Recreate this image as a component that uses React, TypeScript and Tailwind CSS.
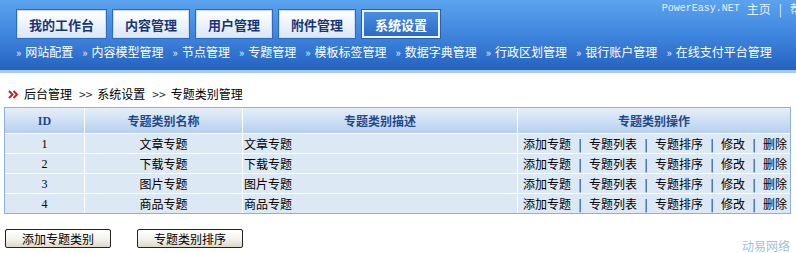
import React from 'react';

const cjk = "font-['SimSun','Noto_Sans_CJK_SC',sans-serif]";

const topTabs = ['我的工作台', '内容管理', '用户管理', '附件管理', '系统设置'];
const subLinks = ['网站配置', '内容模型管理', '节点管理', '专题管理', '模板标签管理', '数据字典管理', '行政区划管理', '银行账户管理', '在线支付平台管理'];
const crumbs = ['后台管理', '系统设置', '专题类别管理'];
const rows = [
  { id: 1, name: '文章专题' },
  { id: 2, name: '下载专题' },
  { id: 3, name: '图片专题' },
  { id: 4, name: '商品专题' },
];
const ops = ['添加专题', '专题列表', '专题排序', '修改', '删除'];

const App: React.FC = () => {
  return (
    <div className={`w-[796px] h-[253px] overflow-hidden bg-white text-[12px] leading-none text-black ${cjk}`}>
      {/* top bar */}
      <div className="h-[73px] border-b-[3px] border-[#a9c9ee] bg-gradient-to-b from-[#5ba3ef] via-[#3f85dd] to-[#2463c0]">
        <div className="flex justify-between items-start">
          <div className="flex gap-[7px] pl-[17px] mt-[10px]">
            {topTabs.map((t, i) =>
              i === 4 ? (
                <div
                  key={t}
                  className="h-[28px] px-[11px] flex items-center border-2 border-[#eaf2fc] bg-gradient-to-b from-[#4b8ee0] to-[#2c6bc6] text-white font-bold text-[13px] shadow-[0_0_0_1px_#2a5fae]"
                >
                  {t}
                </div>
              ) : (
                <div
                  key={t}
                  className="h-[28px] px-[11px] flex items-center border border-[#c9dcf3] bg-gradient-to-b from-white to-[#dbe8f6] text-[#17367a] font-bold text-[13px] shadow-[0_0_0_1px_#2f6ac0]"
                >
                  {t}
                </div>
              )
            )}
          </div>
          <div className="flex items-center h-[14px] mt-[2px] mr-[-6px] text-[#e6effb] whitespace-nowrap">
            <span className="font-['Liberation_Mono',monospace] text-[10px]">PowerEasy.NET</span>
            <span className="ml-[7px]">主页</span>
            <span className="mx-[8px]">|</span>
            <span>帮</span>
          </div>
        </div>
        <div className="flex gap-[9px] pl-[16px] mt-[8px] text-white text-[12px] whitespace-nowrap">
          {subLinks.map((s) => (
            <span key={s} className="flex items-center">
              <span className="text-[11px] mr-[4px] text-[#e8f0fb]">»</span>
              {s}
            </span>
          ))}
        </div>
      </div>

      {/* breadcrumb */}
      <div className="flex items-center h-[14px] mt-[14px] pl-[8px]">
        <svg width="11" height="9" viewBox="0 0 11 9" className="mr-[5px]">
          <path d="M1 1 L4.5 4.5 L1 8" stroke="#c8202c" strokeWidth="2" fill="none" />
          <path d="M5.5 1 L9 4.5 L5.5 8" stroke="#c8202c" strokeWidth="2" fill="none" />
        </svg>
        {crumbs.map((c, i) => (
          <span key={c} className="flex items-center">
            {i > 0 && <span className="ml-[7px] mr-[5px] text-[#333]">&gt;&gt;</span>}
            {c}
          </span>
        ))}
      </div>

      {/* table */}
      <div className="ml-[4px] mt-[6px] w-[787px] border border-[#8fb0d9]">
        <div className="grid grid-cols-[80px_158px_275px_1fr] h-[25px] bg-gradient-to-b from-[#e6effa] via-[#cfe0f4] to-[#b4cfee] text-[#1e4a8c] font-bold">
          <div className="flex items-center justify-center border-r border-white font-['Liberation_Serif',serif] text-[12px]">ID</div>
          <div className="flex items-center justify-center border-r border-white">专题类别名称</div>
          <div className="flex items-center justify-center border-r border-white">专题类别描述</div>
          <div className="flex items-center justify-center">专题类别操作</div>
        </div>
        {rows.map((r) => (
          <div key={r.id} className="grid grid-cols-[80px_158px_275px_1fr] h-[20px] bg-[#dde8f5] border-t border-white">
            <div className="flex items-center justify-center border-r border-white font-['Liberation_Serif',serif]">{r.id}</div>
            <div className="flex items-center justify-center border-r border-white">{r.name}</div>
            <div className="flex items-center pl-[1px] border-r border-white">{r.name}</div>
            <div className="flex items-center pl-[5px] whitespace-nowrap">
              {ops.map((o, i) => (
                <span key={o} className="flex items-center">
                  {i > 0 && <span className="mx-[6px] w-[6px] text-center">|</span>}
                  {o}
                </span>
              ))}
            </div>
          </div>
        ))}
      </div>

      {/* actions */}
      <div className="flex items-end justify-between mt-[15px] pl-[5px] pr-[6px]">
        <div className="flex gap-[26px]">
          <button className="w-[106px] h-[19px] border border-[#222] rounded-[2px] bg-gradient-to-b from-white via-[#f4f3ee] to-[#dcd9cc] text-[12px] text-black">
            添加专题类别
          </button>
          <button className="w-[106px] h-[19px] border border-[#222] rounded-[2px] bg-gradient-to-b from-white via-[#f4f3ee] to-[#dcd9cc] text-[12px] text-black">
            专题类别排序
          </button>
        </div>
        <span className="text-[#a3bfe0] mb-[-4px]">动易网络</span>
      </div>
    </div>
  );
};

export default App;
